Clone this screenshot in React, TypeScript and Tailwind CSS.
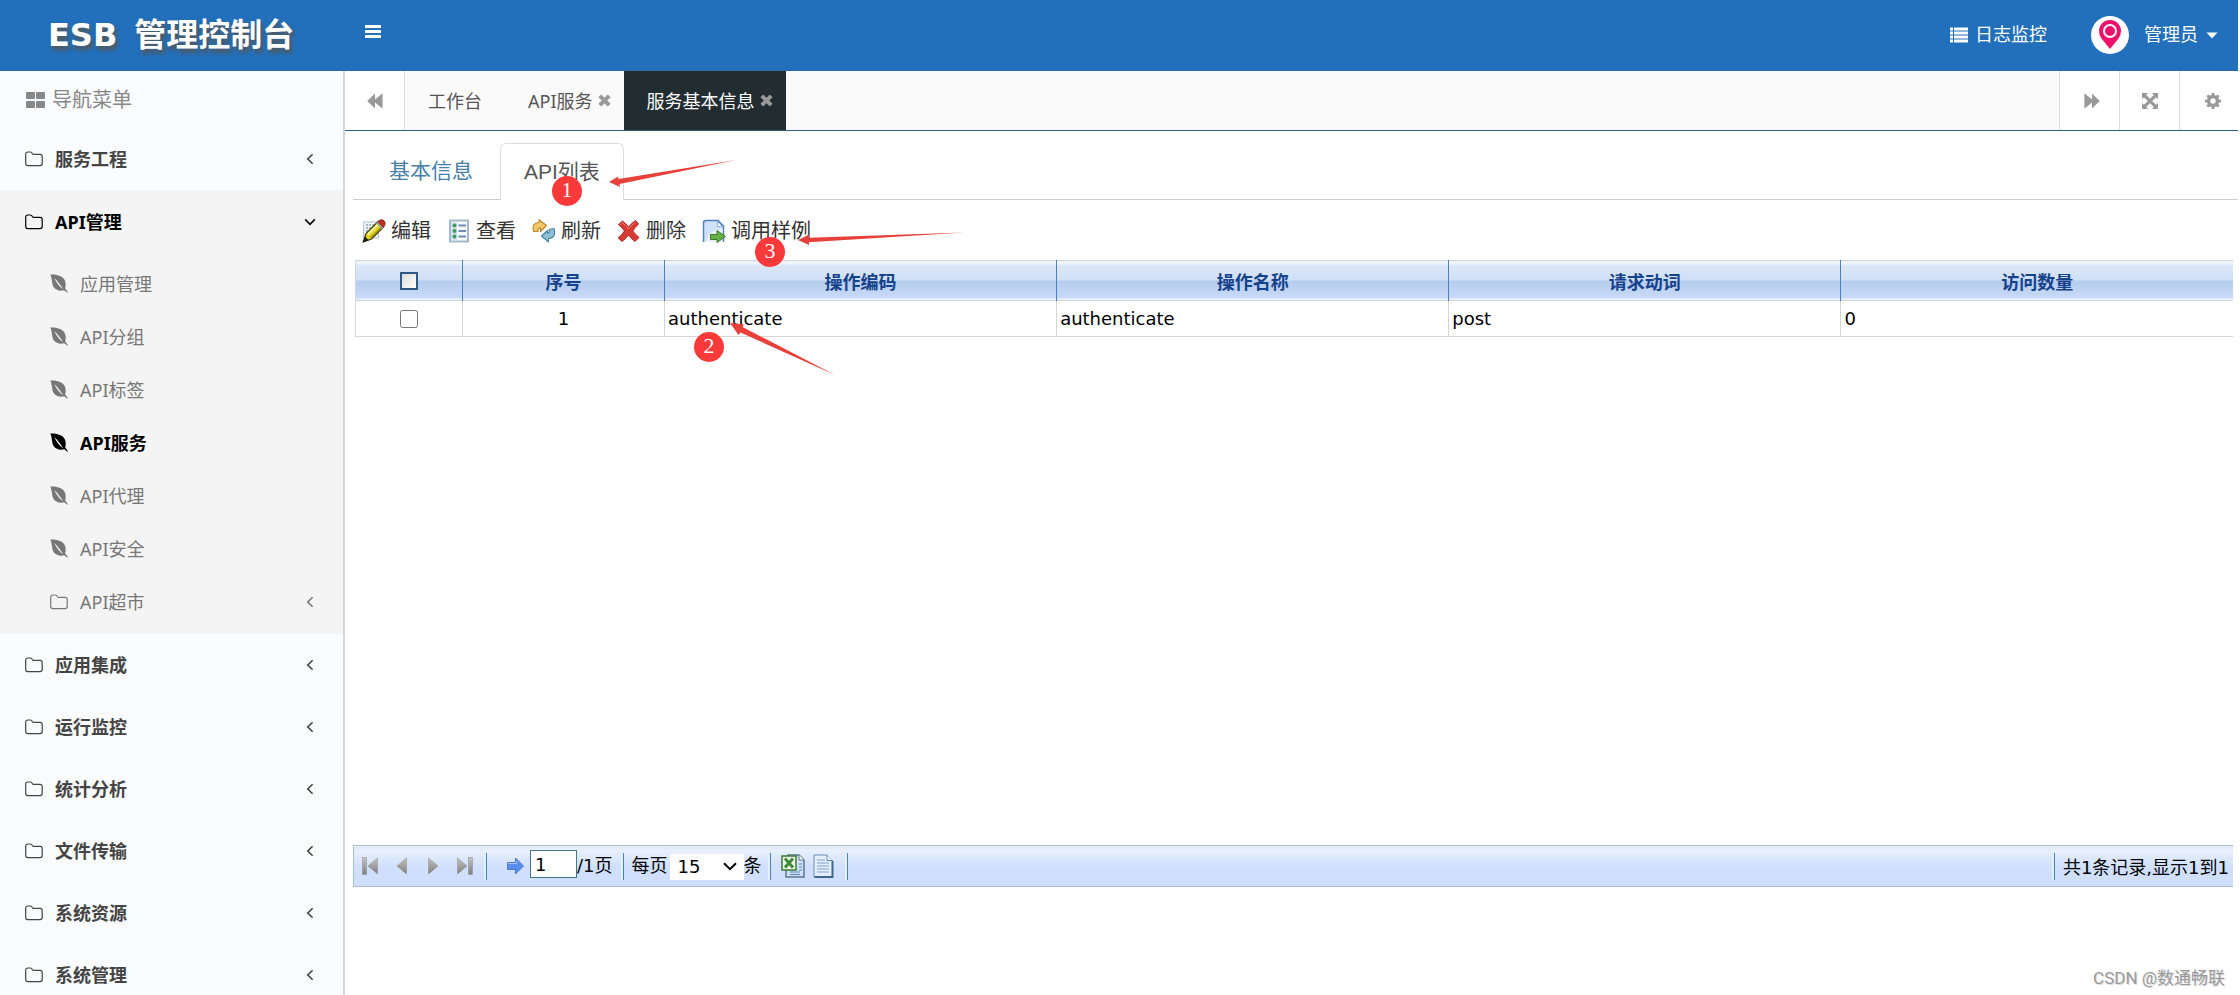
import React, { useState } from 'react';

interface SubMenu {
  label: string;
  folder?: boolean;
}

interface Operation {
  index: number;
  code: string;
  name: string;
  verb: string;
  visits: number;
}

const MENU_FONT = "font-['Noto_Sans','Noto_Sans_CJK_SC',sans-serif]";

const apiMenus: SubMenu[] = [
  { label: '应用管理' },
  { label: 'API分组' },
  { label: 'API标签' },
  { label: 'API服务' },
  { label: 'API代理' },
  { label: 'API安全' },
  { label: 'API超市', folder: true }
];

const bottomMenus = ['应用集成', '运行监控', '统计分析', '文件传输', '系统资源', '系统管理'];

const operations: Operation[] = [
  { index: 1, code: 'authenticate', name: 'authenticate', verb: 'post', visits: 0 }
];

/* ---------- 图标 ---------- */

const FolderIcon = () => (
  <svg className="w-[18px] h-4 shrink-0" viewBox="0 0 18 16" fill="none" stroke="currentColor" strokeWidth="1.2">
    <path d="M0.7 3.2Q0.7 1 2.8 1H5.2Q6.9 1 7.2 2.4Q7.4 3.4 8.6 3.4H15Q17.2 3.4 17.2 5.4V12.6Q17.2 14.6 15 14.6H2.8Q0.7 14.6 0.7 12.6Z" />
  </svg>
);

const LeafIcon = () => (
  <svg className="w-[18px] h-[19px] shrink-0" viewBox="0 0 18 19" fill="currentColor">
    <path d="M0.3 0.6C6 0.2 11.5 1.6 14.2 5.2C16 7.8 16 11 15.2 14.6L18 18.2L17.6 18.7L14.2 16.2C10.6 17.2 6.6 16.8 4 13.6C1.4 10.2 2.6 5.6 0.3 0.6ZM4.2 4C6.4 8.6 9 12.4 13.2 15.2C10.8 11.6 7.4 6.4 4.2 4Z" fillRule="evenodd" />
  </svg>
);

const Chevron = ({ open }: { open?: boolean }) => (
  <svg className="w-3 h-3 shrink-0" viewBox="0 0 12 12" fill="none" stroke="currentColor" strokeWidth="1.6">
    {open ? <path d="M1.2 3.4L6 8.4L10.8 3.4" /> : <path d="M8.6 1.2L3.8 6L8.6 10.8" />}
  </svg>
);

const CloseIcon = () => (
  <svg className="w-[13px] h-[13px]" viewBox="0 0 13 13" fill="none" stroke="#999" strokeWidth="4">
    <path d="M1.8 1.8L11.2 11.2M11.2 1.8L1.8 11.2" />
  </svg>
);

const RewindIcon = () => (
  <svg className="w-4 h-4" viewBox="0 0 16 16" fill="currentColor">
    <path d="M8 0.5V6.6L15.6 0.3V15.7L8 9.4V15.5L0.2 8Z" />
  </svg>
);

const ForwardIcon = () => (
  <svg className="w-4 h-4" viewBox="0 0 16 16" fill="currentColor">
    <path d="M8 0.5V6.6L0.4 0.3V15.7L8 9.4V15.5L15.8 8Z" />
  </svg>
);

const ExpandIcon = () => (
  <svg className="w-4 h-4" viewBox="0 0 16 16" fill="currentColor">
    <path d="M0 0H6L4.2 1.9L8 5.8L11.8 1.9L10 0H16V6L14.1 4.2L10.2 8L14.1 11.8L16 10V16H10L11.8 14.1L8 10.2L4.2 14.1L6 16H0V10L1.9 11.8L5.8 8L1.9 4.2L0 6Z" />
  </svg>
);

const GearIcon = () => (
  <svg className="w-4 h-4" viewBox="0 0 16 16" fill="currentColor" fillRule="evenodd">
    <path d="M6.8 0H9.2L9.6 2.1L11 2.7L12.8 1.5L14.5 3.2L13.3 5L13.9 6.4L16 6.8V9.2L13.9 9.6L13.3 11L14.5 12.8L12.8 14.5L11 13.3L9.6 13.9L9.2 16H6.8L6.4 13.9L5 13.3L3.2 14.5L1.5 12.8L2.7 11L2.1 9.6L0 9.2V6.8L2.1 6.4L2.7 5L1.5 3.2L3.2 1.5L5 2.7L6.4 2.1ZM8 5.3A2.7 2.7 0 1 0 8 10.7A2.7 2.7 0 1 0 8 5.3Z" />
  </svg>
);

const EditIcon = () => (
  <svg className="w-6 h-6" viewBox="0 0 24 24">
    <rect x="1.5" y="3" width="15" height="16" fill="#eef3f8" stroke="#b4c2d0" />
    <path d="M4 6h9M4 9h7M4 12h4" stroke="#8fa5bb" strokeWidth="1.5" strokeDasharray="2 1" />
    <path d="M1.2 23L4 14.5L15.5 3L21 8.500L9.500 20Z" fill="#e3d41c" stroke="#3c3a10" strokeWidth="1.2" />
    <path d="M5.800 15.500L16.500 5" stroke="#fbf6a0" strokeWidth="2" />
    <path d="M8.500 18.800L19.500 8" stroke="#a3930c" strokeWidth="1.5" />
    <path d="M15.500 3L17.800 1.200Q20 0 22.300 2.200Q24 4.400 22.500 6.800L21 8.500Z" fill="#c02f24" stroke="#7c1710" />
    <path d="M14.800 3.600L20.400 9.200" stroke="#9ba697" strokeWidth="2" />
    <path d="M1 23.300L3 17.500L6.800 21.200Z" fill="#1c1c1c" />
  </svg>
);

const ViewIcon = () => (
  <svg className="w-6 h-6" viewBox="0 0 24 24">
    <rect x="3" y="1.500" width="18" height="21" fill="#f6f9fc" stroke="#a3b8ca" strokeWidth="2" />
    <rect x="4" y="2.500" width="6" height="19" fill="#d3e4ea" />
    <g fill="#3f9a63">
      <circle cx="7.500" cy="6.500" r="2" />
      <circle cx="7.500" cy="12" r="2" />
      <circle cx="7.500" cy="17.500" r="2" />
    </g>
    <path d="M11.500 6.500h7.500M11.500 12h7.500M11.500 17.500h7.500" stroke="#6c8bb5" strokeWidth="1.8" />
  </svg>
);

const RefreshIcon = () => (
  <svg className="w-6 h-6" viewBox="0 0 24 24" strokeWidth="1.100" strokeLinejoin="round">
    <path d="M1.500 12.500Q-0.500 3.800 7 3.500V0.800L14.500 6.500L8.500 12.500V9Q5.500 8.800 6 12.500Z" fill="#f3c968" stroke="#b98329" />
    <path d="M22 9.500Q24.500 19 16.500 19.500V23L9.500 17L15.500 11.500V14.500Q18 14 17 10.500Z" fill="#8fc1d8" stroke="#44809f" />
  </svg>
);

const DeleteIcon = () => (
  <svg className="w-6 h-6" viewBox="0 0 24 24">
    <path d="M1.500 5.500L5.500 2Q9 4.500 11.500 8Q14.500 4 18.500 1.500L21.500 5Q18 8.500 15.800 12Q18.500 15.500 22 18.500L18 22.500Q14.500 20 11.500 16Q8.500 20 5 22.500L1.200 19Q5 15.500 7.500 12Q5 8.500 1.500 5.500Z" fill="#d63a33" stroke="#b0322d" />
    <path d="M3.500 5.500L5.500 3.800Q9 6.500 11.500 10Q14.500 6 18 3.800" fill="none" stroke="#ea7d76" />
  </svg>
);

const SampleIcon = () => (
  <svg className="w-6 h-6" viewBox="0 0 24 24">
    <path d="M1.500 23V4Q1.500 1.500 4 1.500H16L21.500 7V23" fill="#d0e2f9" stroke="#5580bd" strokeWidth="1.5" />
    <path d="M15.500 2.500V7.500H20.500Z" fill="#fff" stroke="#8fb0dc" />
    <path d="M3 23Q9 10 20.500 10V23Z" fill="#eaf3fd" />
    <path d="M8.500 15.500H15V11.500L23.500 17.500L15 23.500V20.500H8.500Z" fill="#66ae45" stroke="#3a7e2a" />
  </svg>
);

const ExcelIcon = () => (
  <svg className="w-6 h-6" viewBox="0 0 24 24">
    <path d="M7 1H18L23 6V23H5V14Z" fill="#cfe0f3" stroke="#5a7894" strokeWidth="1.5" />
    <path d="M18 1V6H23" fill="#fff" stroke="#5a7894" />
    <path d="M9 18h10M9 20.500h10M18 10h3M18 13h3M18 16h3" stroke="#5c85b8" />
    <rect x="1" y="2" width="14" height="14" fill="#eef6e9" stroke="#3d7a35" strokeWidth="1.5" />
    <path d="M4 4.500L12 13.500M12 4.500L4 13.500" stroke="#3f8a34" strokeWidth="3" />
  </svg>
);

const TextIcon = () => (
  <svg className="w-6 h-6" viewBox="0 0 24 24">
    <path d="M3 1H16L21.500 6.500V23H3Z" fill="#e4effb" stroke="#6b8fb8" />
    <path d="M3.500 23H21.500V7" fill="none" stroke="#41678f" strokeWidth="2" />
    <path d="M16 1V6.500H21.500" fill="#fff" stroke="#5f82a8" />
    <path d="M6 6h8M6 9h12M6 12h12M6 15h12M6 18h12" stroke="#7fa3cf" />
  </svg>
);

const PageArrow = ({ back, bar }: { back?: boolean; bar?: boolean }) => (
  <svg className="w-4 h-[18px]" viewBox="0 0 16 18">
    <defs>
      <linearGradient id="pageArrow" x1="0" y1="0" x2="0" y2="1">
        <stop offset="0" stopColor="#c4c4c4" />
        <stop offset="1" stopColor="#7d7d7d" />
      </linearGradient>
    </defs>
    <g fill="url(#pageArrow)" stroke="#8c8c8c" strokeWidth="0.5">
      {back ? <path d="M15.500 1V17L6 9Z" /> : <path d="M0.500 1V17L10 9Z" />}
      {bar && (back ? <rect x="0.500" y="0.500" width="4" height="17" /> : <rect x="11.500" y="0.500" width="4" height="17" />)}
    </g>
  </svg>
);

const Separator = () => <span className="w-[3px] h-[27px] shrink-0 bg-[#4a7fc0] border-l-2 border-[#e6f0fc]"></span>;

/* ---------- 頂部 ---------- */

const Header = () => (
  <header className="h-[71px] shrink-0 flex items-center bg-[#2270bb] text-white border-b border-[#2a69a8]">
    <h1 className="w-[344px] pl-12 flex items-center gap-[17px] text-[32px] leading-10 font-bold whitespace-nowrap [text-shadow:2px_4px_4px_#555]">
      <span>ESB</span>
      <span>管理控制台</span>
    </h1>
    <button type="button" aria-label="切换菜单" className="ml-5 pb-1.5">
      <svg className="w-[18px] h-[14px]" viewBox="0 0 18 14" fill="currentColor">
        <rect x="1" width="16" height="3" rx="0.500" />
        <rect x="1" y="5" width="16" height="3" rx="0.500" />
        <rect x="1" y="10" width="16" height="3" rx="0.500" />
      </svg>
    </button>
    <div className="ml-auto pr-5 flex items-center text-lg">
      <a href="#log" className="flex items-center gap-[7px]">
        <svg className="w-[18px] h-4" viewBox="0 0 18 16" fill="currentColor">
          <path d="M0 0.500h3v3H0zM4 0.500h14v3H4zM0 4.500h3v3H0zM4 4.500h14v3H4zM0 8.500h3v3H0zM4 8.500h14v3H4zM0 12.500h3v3H0zM4 12.500h14v3H4z" />
        </svg>
        <span>日志监控</span>
      </a>
      <button type="button" className="ml-11 flex items-center">
        <svg className="w-[38px] h-[38px]" viewBox="0 0 38 38">
          <circle cx="19" cy="19" r="19" fill="#fff" />
          <path d="M19 33L10.500 22.500Q8 19 8 15A11 11 0 0 1 30 15Q30 19 27.500 22.500Z" fill="#f0106a" />
          <circle cx="19" cy="15" r="6" fill="none" stroke="#fff" strokeWidth="2" />
        </svg>
        <span className="ml-[15px]">管理员</span>
        <svg className="ml-2 w-3 h-[7px]" viewBox="0 0 12 7" fill="currentColor">
          <path d="M0.500 0.500H11.500L6 6.500Z" />
        </svg>
      </button>
    </div>
  </header>
);

/* ---------- 側邊選單 ---------- */

const MenuItem = ({ label, open }: { label: string; open?: boolean }) => (
  <a
    href="#menu"
    className={`flex items-center h-[62px] pl-[25px] pr-[27px] text-lg font-bold ${MENU_FONT} ${open ? 'text-black' : 'text-[#444]'}`}
  >
    <FolderIcon />
    <span className="ml-3 flex-1">{label}</span>
    <Chevron open={open} />
  </a>
);

const Sidebar = () => {
  const [current, setCurrent] = useState('API服务');

  return (
    <nav className="w-[345px] shrink-0 overflow-hidden bg-[#f9fbfd] border-r-2 border-[#d3d7dd]">
      <div className="h-[57px] pl-[26px] flex items-center gap-[7px] text-xl text-[#888]">
        <svg className="w-[19px] h-4" viewBox="0 0 19 16" fill="currentColor">
          <rect width="9" height="7" rx="1" />
          <rect x="10" width="9" height="7" rx="1" />
          <rect y="9" width="9" height="7" rx="1" />
          <rect x="10" y="9" width="9" height="7" rx="1" />
        </svg>
        <span>导航菜单</span>
      </div>
      <MenuItem label="服务工程" />
      <div className="bg-[#f4f4f4] pt-px pb-1.5">
        <MenuItem label="API管理" open />
        <ul className="pt-1">
          {apiMenus.map(item => (
            <li key={item.label}>
              <a
                href="#submenu"
                onClick={() => setCurrent(item.label)}
                className={`flex items-center h-[53px] pl-[50px] pr-[27px] text-lg ${MENU_FONT} ${
                  current === item.label ? 'font-bold text-black' : 'text-[#777]'
                }`}
              >
                {item.folder ? <FolderIcon /> : <LeafIcon />}
                <span className="ml-3 flex-1">{item.label}</span>
                {item.folder && <Chevron />}
              </a>
            </li>
          ))}
        </ul>
      </div>
      {bottomMenus.map(label => (
        <MenuItem key={label} label={label} />
      ))}
    </nav>
  );
};

/* ---------- 頁籤 ---------- */

const PageTabs = () => (
  <div className={`h-[60px] shrink-0 flex bg-[#fafafa] border-b border-[#2f5f86] text-lg text-[#555] ${MENU_FONT}`}>
    <button type="button" aria-label="向左" className="w-[60px] flex items-center justify-center bg-white border-r border-[#ddd] text-[#999]">
      <RewindIcon />
    </button>
    <button type="button" className="px-[23px]">工作台</button>
    <button type="button" className="pl-[23px] pr-[13px] flex items-center gap-[5px]">
      API服务
      <CloseIcon />
    </button>
    <button type="button" className="pl-[23px] pr-[13px] flex items-center gap-[5px] bg-[#222d32] text-white">
      服务基本信息
      <CloseIcon />
    </button>
    <div className="ml-auto flex text-[#999]">
      <button type="button" aria-label="向右" className="w-[60px] pl-1 flex items-center justify-center bg-white border-l border-[#ddd]">
        <ForwardIcon />
      </button>
      <button type="button" aria-label="全屏" className="w-[60px] flex items-center justify-center bg-white border-l border-[#ddd]">
        <ExpandIcon />
      </button>
      <button type="button" aria-label="设置" className="w-[59px] pl-2 flex items-center justify-center bg-white border-l border-[#ddd]">
        <GearIcon />
      </button>
    </div>
  </div>
);

const ToolButton = ({ icon, label }: { icon: React.ReactNode; label: string }) => (
  <button type="button" className="flex items-center gap-[5px] text-xl leading-6 text-[#333]">
    {icon}
    <span>{label}</span>
  </button>
);

/* ---------- 表格 ---------- */

const OperationTable = () => {
  const [checked, setChecked] = useState<number[]>([]);
  const allChecked = checked.length === operations.length;

  const toggle = (index: number) => {
    setChecked(checked.includes(index) ? checked.filter(i => i !== index) : [...checked, index]);
  };

  const headCell = 'pt-1 border-l border-[#4a7fc0] font-bold';
  const cell = 'border border-r-0 border-[#d5d5d5] px-[3px]';

  return (
    <table className="w-full table-fixed border-collapse text-lg leading-6 text-black">
      <colgroup>
        <col className="w-[107px]" />
        <col className="w-[202px]" />
        <col />
        <col />
        <col />
        <col />
      </colgroup>
      <thead>
        <tr className="h-10 border border-r-0 border-[#d0d7e2] text-[#15428b] bg-[linear-gradient(#f0f5fc_0px,#f0f5fc_2px,#dce8f6_3px,#cfdff6_18px,#b5ccee_19px,#c9daf8_36px,#eaf1fb_37px)]">
          <th className="align-middle">
            <input
              type="checkbox"
              aria-label="全选"
              checked={allChecked}
              onChange={() => setChecked(allChecked ? [] : operations.map(o => o.index))}
              className="block mx-auto w-[18px] h-[18px] appearance-none border-2 border-[#2c5a85] bg-linear-to-br from-[#dcdcd8] to-white checked:bg-[#2c5a85]"
            />
          </th>
          <th className={headCell}>序号</th>
          <th className={headCell}>操作编码</th>
          <th className={headCell}>操作名称</th>
          <th className={headCell}>请求动词</th>
          <th className={headCell}>访问数量</th>
        </tr>
      </thead>
      <tbody>
        {operations.map(op => (
          <tr key={op.index} className="h-9">
            <td className={cell}>
              <input
                type="checkbox"
                aria-label={`选择 ${op.code}`}
                checked={checked.includes(op.index)}
                onChange={() => toggle(op.index)}
                className="block mx-auto w-[18px] h-[18px]"
              />
            </td>
            <td className={`${cell} text-center`}>{op.index}</td>
            <td className={cell}>{op.code}</td>
            <td className={cell}>{op.name}</td>
            <td className={cell}>{op.verb}</td>
            <td className={cell}>{op.visits}</td>
          </tr>
        ))}
      </tbody>
    </table>
  );
};

/* ---------- 分頁列 ---------- */

const Pager = () => {
  const [page, setPage] = useState('1');

  return (
    <div className="h-[42px] ml-2 mr-[5px] flex items-center border border-r-0 border-t-[#a5c2cc] border-b-[#a9bdd8] border-l-[#a5c2cc] bg-[linear-gradient(#fff_0px,#dde7f5_1px,#e9f0fc_4px,#cfdffd_22px,#d0dffe_100%)] text-lg text-black whitespace-nowrap">
      <div className="ml-2 flex items-center gap-[13px]">
        <button type="button" aria-label="首页"><PageArrow back bar /></button>
        <button type="button" aria-label="上一页"><PageArrow back /></button>
        <button type="button" aria-label="下一页" className="ml-2"><PageArrow /></button>
        <button type="button" aria-label="末页"><PageArrow bar /></button>
      </div>
      <span className="ml-[11px] flex"><Separator /></span>
      <button type="button" aria-label="跳转" className="ml-5">
        <svg className="w-[17px] h-[18px]" viewBox="0 0 17 18">
          <path d="M0.500 5.500H8.500V1L16.500 9L8.500 17V12.500H0.500Z" fill="#5b8df0" stroke="#3c68c4" strokeWidth="0.800" />
          <path d="M1 6.500H9.500V4" fill="none" stroke="#a9c6fb" />
        </svg>
      </button>
      <label className="ml-1.5 flex items-center">
        <input
          type="text"
          aria-label="页码"
          value={page}
          onChange={e => setPage(e.target.value)}
          className="w-[47px] h-7 mb-1 px-1 bg-white border border-[#3f7a8c] text-lg leading-6"
        />
        <span>/1页</span>
      </label>
      <span className="mx-2 flex"><Separator /></span>
      <label className="flex items-center">
        每页
        <span className="relative ml-0.5 mt-0.5 flex">
          <select defaultValue="15" className="w-[74px] h-[26px] pl-2 appearance-none bg-white text-lg leading-6">
            <option value="15">15</option>
            <option value="30">30</option>
            <option value="50">50</option>
          </select>
          <svg className="absolute right-[7px] top-2 w-[14px] h-[9px] pointer-events-none" viewBox="0 0 14 9" fill="none" stroke="#000" strokeWidth="2">
            <path d="M1 1.200L7 7.200L13 1.200" />
          </svg>
        </span>
        条
      </label>
      <span className="ml-1.5 mr-2.5 flex"><Separator /></span>
      <button type="button" aria-label="导出Excel"><ExcelIcon /></button>
      <button type="button" aria-label="导出文本" className="ml-1.5"><TextIcon /></button>
      <span className="ml-2.5 flex"><Separator /></span>
      <span className="ml-auto flex"><Separator /></span>
      <span className="ml-2 mr-1 pt-1">共1条记录,显示1到1</span>
    </div>
  );
};

/* ---------- 標註 ---------- */

const Annotations = () => (
  <div className="absolute inset-0 pointer-events-none text-white text-[22px] leading-7 text-center font-['Liberation_Serif',serif]">
    <svg className="absolute left-0 top-0 w-[1000px] h-[400px]" viewBox="0 0 1000 400" fill="#e8413c">
      <path d="M609 182L618 176.500L618.500 179L736 160L619.500 184L620 187Z" />
      <path d="M730 323L744 324.500L742.500 327L835 375L740.500 332.500L738.500 335Z" />
      <path d="M798 240L809 234.500V237.800L964 232.500L809 242.300V245Z" />
    </svg>
    <span className="absolute left-[552px] top-[176px] w-[30px] h-[30px] rounded-full bg-[#fa3a3a]">1</span>
    <span className="absolute left-[694px] top-[332px] w-[30px] h-[30px] rounded-full bg-[#fa3a3a]">2</span>
    <span className="absolute left-[755px] top-[237px] w-[30px] h-[30px] rounded-full bg-[#fa3a3a]">3</span>
  </div>
);

export default function App() {
  return (
    <div className="relative h-screen flex flex-col overflow-hidden bg-white pr-[2px] font-['DejaVu_Sans','Noto_Sans_CJK_SC',sans-serif]">
      <Header />
      <div className="flex-1 min-h-0 flex">
        <Sidebar />
        <main className="flex-1 min-w-0 flex flex-col">
          <PageTabs />

          {/* 內容頁籤 */}
          <div className="ml-2 mt-3 pl-[13px] flex border-b border-[#ccc] text-[21px] leading-8 font-['Liberation_Sans','Noto_Sans_CJK_SC',sans-serif]">
            <button type="button" className="px-[23px] py-3 mr-1 text-[#4580a8]">基本信息</button>
            <button type="button" className="px-[23px] py-3 -mb-px bg-white border border-b-0 border-[#ddd] rounded-t-md text-[#555]">API列表</button>
          </div>

          <div className="ml-[17px] mt-[19px] mb-[17px] flex gap-4">
            <ToolButton icon={<EditIcon />} label="编辑" />
            <ToolButton icon={<ViewIcon />} label="查看" />
            <ToolButton icon={<RefreshIcon />} label="刷新" />
            <ToolButton icon={<DeleteIcon />} label="删除" />
            <ToolButton icon={<SampleIcon />} label="调用样例" />
          </div>

          <div className="flex-1 ml-[10px] mr-[5px]">
            <OperationTable />
          </div>

          <Pager />
          <footer className="h-[108px] shrink-0 pr-[13px] pb-1 flex items-end justify-end text-[17px] text-[#999] [text-shadow:1px_1px_0_#ddd] font-['Roboto','Noto_Sans_CJK_SC',sans-serif]">
            CSDN @数通畅联
          </footer>
        </main>
      </div>
      <Annotations />
    </div>
  );
}
